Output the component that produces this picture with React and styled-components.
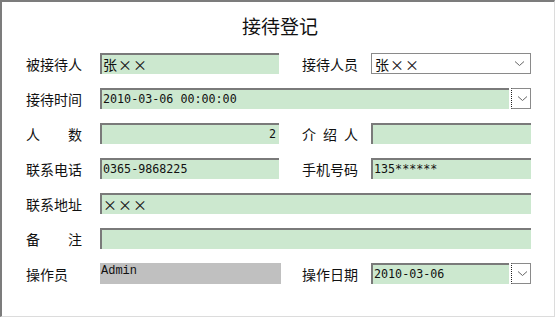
import React from "react";
import styled, { createGlobalStyle } from "styled-components";

const GlobalStyle = createGlobalStyle`
  html, body {
    margin: 0;
    padding: 0;
    background: #fff;
  }
  body {
    font-family: "Noto Sans CJK SC", "Noto Sans", sans-serif;
  }
`;

const Chevron = () => (
  <svg width="11" height="7" viewBox="0 0 11 7">
    <path d="M1 1.5 L5.5 5.5 L10 1.5" fill="none" stroke="#666" strokeWidth="1" />
  </svg>
);

const App = () => {
  return (
    <>
      <GlobalStyle />
      <Frame>
        <Title>接待登记</Title>
        <Form>
          <Label>被接待人</Label>
          <Field cjk>张××</Field>
          <Gap />
          <Label>接待人员</Label>
          <Select>
            <Value cjk>张××</Value>
            <Chevron />
          </Select>

          <Label>接待时间</Label>
          <Wide>
            <Field>2010-03-06 00:00:00</Field>
            <DropButton>
              <Chevron />
            </DropButton>
          </Wide>

          <Label justify>人数</Label>
          <Field align="right">2</Field>
          <Gap />
          <Label justify>介绍人</Label>
          <Field />

          <Label>联系电话</Label>
          <Field>0365-9868225</Field>
          <Gap />
          <Label>手机号码</Label>
          <Field>135******</Field>

          <Label>联系地址</Label>
          <Wide>
            <Field cjk>×××</Field>
          </Wide>

          <Label justify>备注</Label>
          <Wide>
            <Field />
          </Wide>

          <Label>操作员</Label>
          <ReadOnly>Admin</ReadOnly>
          <Gap />
          <Label>操作日期</Label>
          <DateBox>
            <Field>2010-03-06</Field>
            <DropButton>
              <Chevron />
            </DropButton>
          </DateBox>
        </Form>
      </Frame>
    </>
  );
};

export default App;

const Frame = styled.div`
  box-sizing: border-box;
  width: 555px;
  height: 317px;
  border-top: 2px solid #7c7c7c;
  border-left: 2px solid #7c7c7c;
  border-right: 1px solid #dcdcdc;
  border-bottom: 1px solid #dcdcdc;
  display: flex;
  flex-direction: column;
  align-items: center;
`;

const Title = styled.div`
  margin-top: 11px;
  height: 26px;
  line-height: 26px;
  font-size: 19px;
  color: #111;
  padding-left: 4px;
`;

const Form = styled.div`
  align-self: flex-start;
  margin-top: 14px;
  margin-left: 24px;
  display: grid;
  grid-template-columns: 74px 179px 23px 69px 160px;
  grid-auto-rows: 21px;
  row-gap: 14px;
  align-items: center;
`;

const Label = styled.div`
  width: 56px;
  font-size: 14px;
  color: #111;
  white-space: nowrap;
  text-align: ${(p) => (p.justify ? "justify" : "left")};
  text-align-last: ${(p) => (p.justify ? "justify" : "left")};
`;

const Gap = styled.div``;

const Field = styled.div`
  box-sizing: border-box;
  height: 21px;
  flex: 1;
  min-width: 0;
  background: #cce8cf;
  border-top: 2px solid #7a7a7a;
  border-left: 2px solid #7a7a7a;
  padding: 0 3px 0 1px;
  font-family: ${(p) =>
    p.cjk
      ? `"Noto Sans CJK SC", sans-serif`
      : `"DejaVu Sans Mono", monospace`};
  font-size: ${(p) => (p.cjk ? "14px" : "11.7px")};
  letter-spacing: ${(p) => (p.cjk ? "1px" : "0")};
  line-height: 18px;
  color: #111;
  white-space: nowrap;
  overflow: hidden;
  text-align: ${(p) => p.align || "left"};
`;

const Wide = styled.div`
  grid-column: 2 / 6;
  display: flex;
  gap: 2px;
  height: 21px;
`;

const DateBox = styled.div`
  display: flex;
  gap: 2px;
  height: 21px;
`;

const DropButton = styled.div`
  box-sizing: border-box;
  width: 20px;
  height: 21px;
  border: 1px solid #8a8a8a;
  border-left: 1px dotted #222;
  background: #fff;
  display: flex;
  align-items: center;
  justify-content: center;
  padding-left: 2px;
`;

const Select = styled.div`
  box-sizing: border-box;
  height: 21px;
  border: 1px solid #8a8a8a;
  background: #fff;
  display: flex;
  align-items: center;
  justify-content: space-between;
  padding: 0 5px 0 3px;
  color: #111;
`;

const Value = styled.span`
  font-size: 14px;
  letter-spacing: ${(p) => (p.cjk ? "1px" : "0")};
  line-height: 18px;
`;

const ReadOnly = styled.div`
  box-sizing: border-box;
  height: 21px;
  width: 181px;
  background: #c0c0c0;
  padding: 0 1px;
  font-family: "Liberation Mono", "DejaVu Sans Mono", monospace;
  font-size: 12px;
  line-height: 16px;
  color: #111;
`;
